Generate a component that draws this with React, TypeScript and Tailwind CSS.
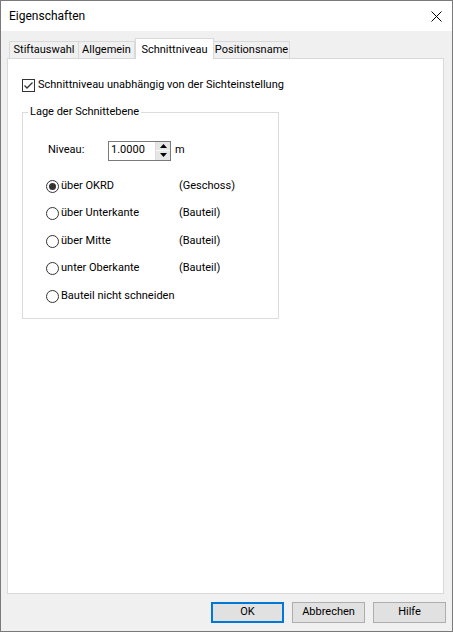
import React from "react";

const FONT = "font-['Segoe_UI','Roboto',sans-serif] text-[11px] text-black";

const tabs = [
  { label: "Stiftauswahl", w: "w-[70px]" },
  { label: "Allgemein", w: "w-[57px]" },
  { label: "Schnittniveau", w: "w-[79px]", active: true },
  { label: "Positionsname", w: "w-[77px]" },
];

const options = [
  { label: "über OKRD", note: "(Geschoss)", checked: true },
  { label: "über Unterkante", note: "(Bauteil)" },
  { label: "über Mitte", note: "(Bauteil)" },
  { label: "unter Oberkante", note: "(Bauteil)" },
  { label: "Bauteil nicht schneiden", note: "" },
];

const Radio = ({ checked }: { checked?: boolean }) => (
  <svg width="13" height="13" viewBox="0 0 13 13" className="shrink-0">
    <circle cx="6.5" cy="6.5" r="6" fill="#fff" stroke="#333" strokeWidth="1" />
    {checked && <circle cx="6.5" cy="6.5" r="3.5" fill="#333" />}
  </svg>
);

const Checkbox = () => (
  <svg width="13" height="13" viewBox="0 0 13 13" className="shrink-0">
    <rect x="0.5" y="0.5" width="12" height="12" fill="#fff" stroke="#333" />
    <path d="M2.5 6.5 L5 9 L10.5 3.5" fill="none" stroke="#333" strokeWidth="1.3" />
  </svg>
);

const Spinner = () => (
  <div className="flex flex-col w-[15px] h-full border-l border-[#dcdcdc]">
    <div className="flex-1 flex items-center justify-center bg-[#e6e6e6] border-b border-[#f8f8f8]">
      <svg width="7" height="4" viewBox="0 0 7 4">
        <path d="M0 4 L3.5 0 L7 4 Z" fill="#000" />
      </svg>
    </div>
    <div className="flex-1 flex items-center justify-center bg-[#e6e6e6]">
      <svg width="7" height="4" viewBox="0 0 7 4">
        <path d="M0 0 L3.5 4 L7 0 Z" fill="#000" />
      </svg>
    </div>
  </div>
);

const Button = ({ label, primary }: { label: string; primary?: boolean }) => (
  <button
    className={
      primary
        ? "w-[73px] h-[21px] bg-[#e1e1e1] border-2 border-[#0078d7] flex items-center justify-center"
        : "w-[73px] h-[21px] bg-[#e1e1e1] border border-[#adadad] flex items-center justify-center"
    }
  >
    {label}
  </button>
);

export default function App() {
  return (
    <div className={`w-[453px] h-[632px] border border-[#7a7a7a] bg-[#f0f0f0] flex flex-col ${FONT}`}>
      <div className="h-[30px] bg-white flex items-center justify-between pl-[8px] pr-[10px] shrink-0 text-[12px]">
        <span>Eigenschaften</span>
        <svg width="11" height="11" viewBox="0 0 11 11">
          <path d="M0.5 0.5 L10.5 10.5 M10.5 0.5 L0.5 10.5" stroke="#000" strokeWidth="1" />
        </svg>
      </div>

      <div className="flex flex-col pt-[7px] pl-[6px]">
        <div className="flex items-end pl-[2px] h-[21px] relative z-10 -mb-px">
          {tabs.map((t) =>
            t.active ? (
              <div
                key={t.label}
                className={`${t.w} h-[21px] bg-white border border-b-0 border-[#d9d9d9] flex items-start justify-center pt-[3px] whitespace-nowrap`}
              >
                {t.label}
              </div>
            ) : (
              <div
                key={t.label}
                className={`${t.w} h-[18px] bg-[#f0f0f0] border border-[#d9d9d9] -ml-px first:ml-0 flex items-center justify-center pt-[1px] whitespace-nowrap`}
              >
                {t.label}
              </div>
            )
          )}
        </div>

        <div className="w-[437px] h-[536px] bg-white border border-[#d9d9d9] pt-[20px] pl-[14px] flex flex-col">
          <div className="flex items-center gap-[3px] h-[13px]">
            <Checkbox />
            <span className="whitespace-nowrap">Schnittniveau unabhängig von der Sichteinstellung</span>
          </div>

          <fieldset className="mt-[12px] w-[257px] h-[215px] border border-[#dcdcdc] pb-[18px]">
            <legend className="ml-[5px] px-[2px]">Lage der Schnittebene</legend>

            <div className="flex items-center mt-[20px] pl-[25px]">
              <span className="w-[60px]">Niveau:</span>
              <div className="w-[63px] h-[20px] border border-[#7a7a7a] flex items-center">
                <span className="flex-1 pl-[2px]">1.0000</span>
                <Spinner />
              </div>
              <span className="ml-[4px]">m</span>
            </div>

            <div className="flex flex-col pl-[23px] mt-[19px] gap-[14.5px]">
              {options.map((o) => (
                <div key={o.label} className="flex items-center h-[13px] whitespace-nowrap">
                  <Radio checked={o.checked} />
                  <span className="w-[120px] pl-[2px]">{o.label}</span>
                  <span>{o.note}</span>
                </div>
              ))}
            </div>
          </fieldset>
        </div>
      </div>

      <div className="flex justify-end gap-[8px] pr-[6px] mt-[8px]">
        <Button label="OK" primary />
        <Button label="Abbrechen" />
        <Button label="Hilfe" />
      </div>
    </div>
  );
}
